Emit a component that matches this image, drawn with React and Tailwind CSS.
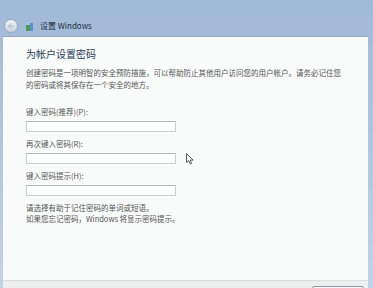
import { ArrowLeft } from 'lucide-react';

const FONT = { fontFamily: '"Noto Sans CJK SC", "Liberation Sans", sans-serif' };

function Field({ label }) {
  return (
    <div className="flex flex-col">
      <span className="text-[7.5px] leading-[10px] text-[#555]">{label}</span>
      <div className="mt-[4px] h-[11px] w-[150px] border border-[#c9cdce] border-t-[#b4b9bb] bg-[#fdfefe]" />
    </div>
  );
}

export default function App() {
  return (
    <div className="w-[373px] h-[288px] overflow-hidden bg-gradient-to-b from-[#a0b9d7] to-[#bfd3e9] flex flex-col" style={FONT}>
      {/* Title row */}
      <div className="h-[36px] flex items-end pb-[3px] pl-[4px] gap-[8px]">
        <div className="w-[14px] h-[14px] rounded-full border border-[#9aa9b9] bg-gradient-to-b from-[#eef2f6] to-[#c9d3dc] flex items-center justify-center">
          <ArrowLeft size={8} strokeWidth={3} className="text-[#a9b6c2]" />
        </div>
        <div className="flex items-center gap-[6px] mb-[2px]">
          <svg width="8" height="9" viewBox="0 0 8 9">
            <rect x="0" y="3" width="4" height="6" fill="#4d9a5a" />
            <rect x="4" y="1" width="3" height="8" fill="#5b8fc6" />
            <rect x="1" y="0" width="3" height="3" fill="#9cc4e8" />
          </svg>
          <span className="text-[8px] leading-[10px] text-[#1e2b3a]">设置 Windows</span>
        </div>
      </div>

      {/* Content panel */}
      <div className="flex-1 ml-[3px] mr-[5px] bg-[#f9fbfa] border-t border-[#98a8ba] flex flex-col">
        <div className="flex-1 pl-[23px] pt-[10px] flex flex-col">
          <h1 className="text-[10px] leading-[14px] text-[#2a3d58] font-normal">为帐户设置密码</h1>
          <p className="mt-[6px] text-[7.5px] leading-[12px] text-[#555] w-[318px]">
            创建密码是一项明智的安全预防措施，可以帮助防止其他用户访问您的用户帐户。请务必记住您的密码或将其保存在一个安全的地方。
          </p>
          <div className="mt-[16px] flex flex-col gap-[7px]">
            <Field label="键入密码(推荐)(P):" />
            <Field label="再次键入密码(R):" />
            <Field label="键入密码提示(H):" />
          </div>
          <p className="mt-[6px] text-[7.5px] leading-[11px] text-[#555]">
            请选择有助于记住密码的单词或短语。
            <br />
            如果您忘记密码，Windows 将显示密码提示。
          </p>
        </div>
        {/* Footer */}
        <div className="h-[8px] border-t border-[#dcdfe0] bg-[#eef0f0] flex justify-end pr-[4px]">
          <div className="mt-[5px] w-[52px] h-[10px] border border-[#8e9aa6] rounded-t-[2px] bg-[#f2f4f5]" />
        </div>
      </div>

      {/* Mouse cursor */}
      <svg className="absolute left-[186px] top-[153px]" width="8" height="12" viewBox="0 0 8 12">
        <path d="M0.5 0.5 L0.5 9.5 L2.7 7.6 L4.3 11 L5.6 10.4 L4.1 7.1 L7 7.1 Z" fill="#fff" stroke="#333" strokeWidth="0.8" />
      </svg>
    </div>
  );
}
